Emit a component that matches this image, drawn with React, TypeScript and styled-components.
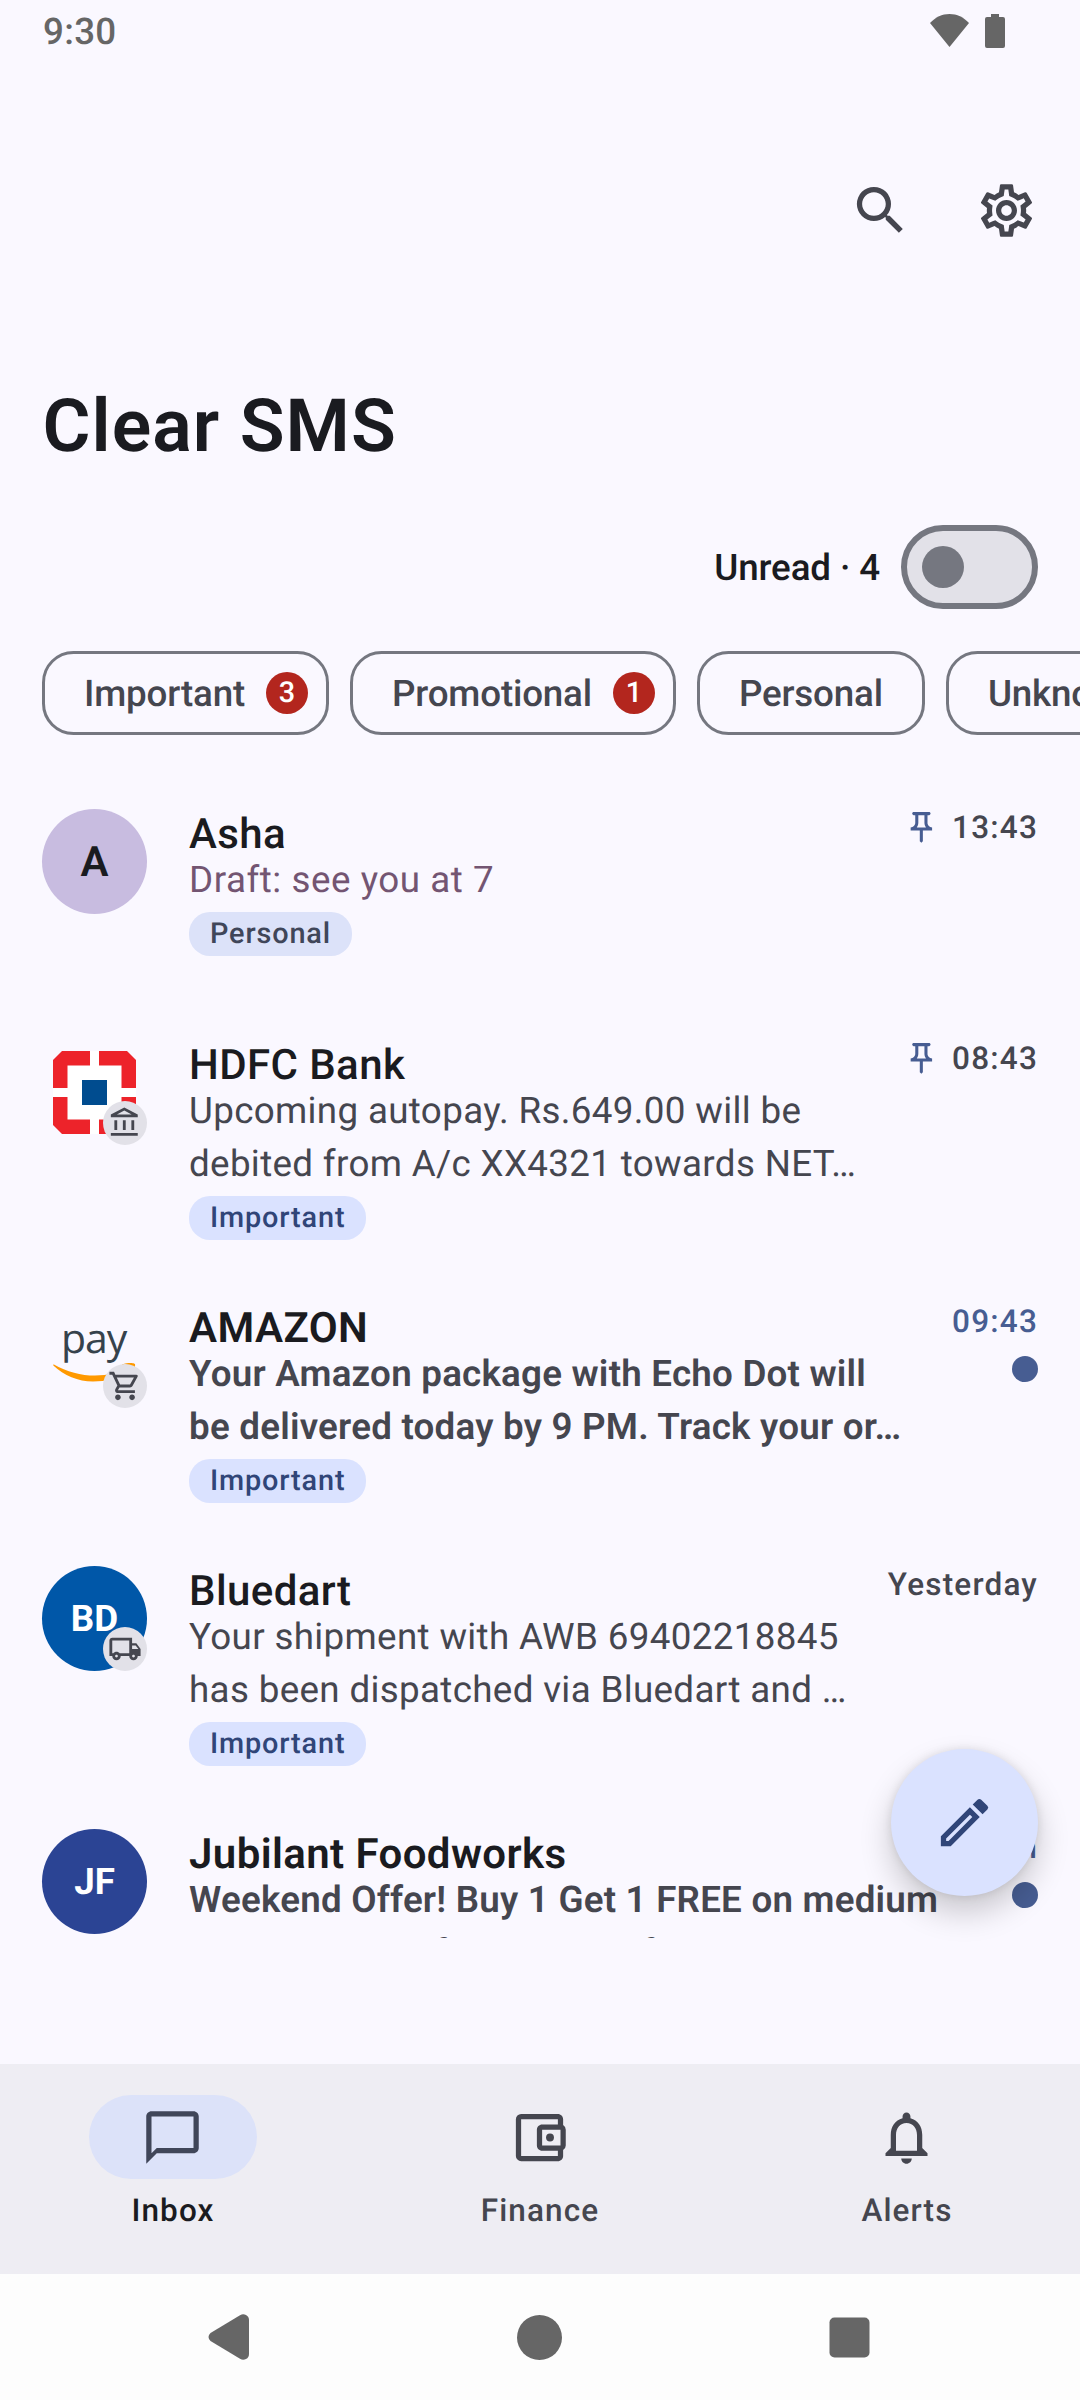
import React from "react";
import styled, { createGlobalStyle } from "styled-components";
import {
  MdSearch,
  MdOutlineSettings,
  MdOutlinePushPin,
  MdOutlineAccountBalance,
  MdOutlineShoppingCart,
  MdOutlineLocalShipping,
  MdOutlineEdit,
  MdChatBubbleOutline,
  MdOutlineAccountBalanceWallet,
  MdNotificationsNone,
} from "react-icons/md";

const color = {
  surface: "#FAF8FF",
  container: "#EEEDF3",
  containerHigh: "#E2E1E8",
  onSurface: "#1A1B20",
  onVariant: "#45464F",
  outline: "#757780",
  primary: "#475D92",
  primaryContainer: "#DAE2FF",
  onPrimaryContainer: "#304578",
  secondaryContainer: "#DCE2F9",
  onSecondaryContainer: "#404659",
  tertiary: "#735572",
  badge: "#B3261E",
  system: "#666666",
};

const GlobalStyle = createGlobalStyle`
  * { box-sizing: border-box; }
  body { margin: 0; background: ${color.surface}; }
`;

const Screen = styled.div`
  width: 1080px;
  height: 2400px;
  display: flex;
  flex-direction: column;
  overflow: hidden;
  background: ${color.surface};
  color: ${color.onSurface};
  font-family: Roboto, "Noto Sans", sans-serif;
  font-size: 36.75px;
  text-rendering: geometricPrecision;
  white-space: nowrap;
  svg { display: block; flex: none; }
`;

const StatusBar = styled.header`
  height: 63px;
  flex: none;
  display: flex;
  align-items: flex-start;
  justify-content: space-between;
  padding: 10px 75px 0 43px;
  color: ${color.system};
  font-weight: 500;
  line-height: 43px;
  letter-spacing: 0.3px;
`;

const StatusIcons = styled.div`
  display: flex;
  gap: 16px;
  padding-top: 4px;
`;

const TopActions = styled.div`
  height: 295px;
  flex: none;
  display: flex;
  justify-content: flex-end;
  gap: 63px;
  padding: 116px 42px 0 0;
  color: ${color.onVariant};
`;

const Title = styled.h1`
  margin: 0;
  padding: 25px 42.5px 0;
  height: 167px;
  flex: none;
  font-size: 73.5px;
  line-height: 86px;
  font-weight: 600;
  letter-spacing: 1.05px;
`;

const UnreadRow = styled.div`
  height: 84px;
  flex: none;
  display: flex;
  align-items: center;
  justify-content: flex-end;
  gap: 21px;
  padding-right: 42px;
  font-weight: 500;
  letter-spacing: -0.12px;
`;

const Switch = styled.div`
  width: 137px;
  height: 84px;
  display: flex;
  align-items: center;
  padding-left: 15px;
  border: 6px solid ${color.outline};
  border-radius: 42px;
  background: ${color.containerHigh};
`;

const Thumb = styled.div`
  width: 42px;
  height: 42px;
  border-radius: 50%;
  background: ${color.outline};
`;

const Filters = styled.nav`
  margin-top: 42px;
  height: 84px;
  flex: none;
  display: flex;
  gap: 21px;
  padding-left: 42px;
`;

const Filter = styled.div<{ $counted: boolean }>`
  flex: none;
  display: flex;
  align-items: center;
  gap: 21px;
  padding: 0 ${(p) => (p.$counted ? 18 : 39)}px 0 39px;
  border: 3px solid ${color.outline};
  border-radius: 31.5px;
  color: ${color.onVariant};
  font-weight: 500;
  letter-spacing: -0.17px;
`;

const Count = styled.span`
  width: 42px;
  height: 42px;
  border-radius: 50%;
  background: ${color.badge};
  color: #fff;
  font-size: 28.875px;
  line-height: 43px;
  letter-spacing: 0;
  text-align: center;
`;

const ListArea = styled.div`
  position: relative;
  height: 1329px;
  flex: none;
`;

const List = styled.main`
  height: 1203px;
  padding-top: 43px;
  overflow: hidden;
`;

const Row = styled.article`
  min-height: 231px;
  display: flex;
  padding: 31px 42px 32px;
`;

const Avatar = styled.div<{ $bg?: string; $fg?: string }>`
  position: relative;
  width: 105px;
  height: 105px;
  flex: none;
  display: flex;
  align-items: center;
  justify-content: center;
  border-radius: 50%;
  background: ${(p) => p.$bg ?? "transparent"};
  color: ${(p) => p.$fg ?? "#fff"};
`;

const Initials = styled.span<{ $size: number; $weight: number }>`
  padding-top: ${(p) => (p.$size > 40 ? 1 : 0)}px;
  font-size: ${(p) => p.$size}px;
  font-weight: ${(p) => p.$weight};
`;

const CategoryBadge = styled.span`
  position: absolute;
  right: 0;
  bottom: 0;
  width: 44px;
  height: 44px;
  display: flex;
  align-items: center;
  justify-content: center;
  border-radius: 50%;
  background: ${color.containerHigh};
  color: ${color.onVariant};
`;

const Body = styled.div`
  flex: 1;
  min-width: 0;
  margin-left: 42px;
  display: flex;
  flex-direction: column;
  align-items: flex-start;
`;

const Name = styled.div<{ $unread?: boolean }>`
  padding-top: 7px;
  font-size: 42px;
  line-height: 38px;
  letter-spacing: 0.4px;
  font-weight: ${(p) => (p.$unread ? 600 : 500)};
`;

const Preview = styled.div<{ $unread?: boolean; $draft?: boolean }>`
  line-height: 52.5px;
  letter-spacing: ${(p) => (p.$unread ? 0.22 : p.$draft ? 0.54 : 0.34)}px;
  font-weight: ${(p) => (p.$unread ? 600 : 400)};
  color: ${(p) => (p.$draft ? color.tertiary : color.onVariant)};
`;

const Tag = styled.span<{ $strong?: boolean }>`
  margin-top: ${(p) => (p.$strong ? 6 : 5.5)}px;
  height: 44px;
  padding: 0 21px;
  border-radius: 21px;
  font-size: 28.875px;
  line-height: 45px;
  font-weight: 500;
  letter-spacing: 0.86px;
  background: ${(p) => (p.$strong ? color.primaryContainer : color.secondaryContainer)};
  color: ${(p) => (p.$strong ? color.onPrimaryContainer : color.onSecondaryContainer)};
`;

const Meta = styled.div<{ $unread?: boolean }>`
  flex: none;
  display: flex;
  flex-direction: column;
  align-items: flex-end;
  gap: 16px;
  color: ${(p) => (p.$unread ? color.primary : color.onVariant)};
`;

const Time = styled.div`
  display: flex;
  align-items: center;
  gap: 12px;
  font-size: 31.5px;
  line-height: 37px;
  font-weight: 500;
  letter-spacing: 1.2px;
  svg { color: ${color.primary}; }
`;

const UnreadDot = styled.span`
  width: 26px;
  height: 26px;
  border-radius: 50%;
  background: ${color.primary};
`;

const Fab = styled.button`
  position: absolute;
  right: 42px;
  top: 1014px;
  width: 147px;
  height: 147px;
  display: flex;
  align-items: center;
  justify-content: center;
  border: 0;
  padding: 0;
  border-radius: 50%;
  background: ${color.primaryContainer};
  color: ${color.onPrimaryContainer};
  box-shadow: 0 16px 32px rgba(0, 0, 0, 0.2), 0 0 10px rgba(0, 0, 0, 0.1);
`;

const BottomNav = styled.nav`
  height: 210px;
  flex: none;
  display: flex;
  gap: 21px;
  background: ${color.container};
`;

const NavItem = styled.div<{ $active?: boolean }>`
  flex: 1;
  display: flex;
  flex-direction: column;
  align-items: center;
  padding-top: 31px;
  gap: 11px;
  font-size: 31.5px;
  line-height: 42px;
  font-weight: 500;
  letter-spacing: 1.1px;
  color: ${(p) => (p.$active ? color.onSurface : color.onVariant)};
`;

const Pill = styled.div<{ $active?: boolean }>`
  width: 168px;
  height: 84px;
  display: flex;
  align-items: center;
  justify-content: center;
  padding-right: 1px;
  border-radius: 42px;
  background: ${(p) => (p.$active ? color.secondaryContainer : "transparent")};
  color: ${(p) => (p.$active ? color.onSecondaryContainer : color.onVariant)};
`;

const SystemNav = styled.footer`
  height: 126px;
  flex: none;
  display: flex;
  align-items: center;
  justify-content: space-between;
  padding: 0 210px 0 208px;
  background: #fdfdfd;
`;

const HdfcLogo = () => (
  <svg width="83" height="83" viewBox="0 0 83 83">
    <path d="M9 0H74L83 9V74L74 83H9L0 74V9Z" fill="#ED232A" />
    <path d="M14.500 14.500H68.500V68.500H14.500ZM37 0H46V83H37ZM0 37H83V46H0Z" fill="#fff" />
    <rect x="29" y="29" width="25" height="25" fill="#004C8F" />
  </svg>
);

const PayWord = styled.span`
  position: absolute;
  left: 19px;
  top: 10px;
  color: #36424c;
  font-family: "Open Sans", "Noto Sans", sans-serif;
  font-size: 41px;
  font-weight: 500;
  line-height: 50px;
  letter-spacing: -1.1px;
`;

const Smile = styled.svg`
  position: absolute;
  left: 11px;
  top: 60px;
`;

const AmazonPayLogo = () => (
  <>
    <PayWord>pay</PayWord>
    <Smile width="84" height="20" viewBox="0 0 84 20">
      <path d="M0.500 1.200C14 9 28 12.500 42 12.500C55 12.300 66 9.500 76 5.500L73 10C64 15 53 18.500 40 18.500C25 18.500 11 12.500 0.300 2.500Z" fill="#FF9900" />
      <path d="M69 1.500C74 -0.500 80 -0.500 82 1C82.500 4 81 10 77 14L75 13C77 8 78 5 77 4C75 3 71 3 69 3Z" fill="#FF9900" />
    </Smile>
  </>
);

type Message = {
  name: string;
  lines: string[];
  time: string;
  tag?: string;
  pinned?: boolean;
  unread?: boolean;
  draft?: boolean;
  avatar: React.ReactNode;
};

const messages: Message[] = [
  {
    name: "Asha",
    lines: ["Draft: see you at 7"],
    time: "13:43",
    tag: "Personal",
    pinned: true,
    draft: true,
    avatar: (
      <Avatar $bg="#C8BCE0" $fg={color.onSurface}>
        <Initials $size={42} $weight={600}>A</Initials>
      </Avatar>
    ),
  },
  {
    name: "HDFC Bank",
    lines: ["Upcoming autopay. Rs.649.00 will be", "debited from A/c XX4321 towards NET…"],
    time: "08:43",
    tag: "Important",
    pinned: true,
    avatar: (
      <Avatar>
        <HdfcLogo />
        <CategoryBadge><MdOutlineAccountBalance size={34} /></CategoryBadge>
      </Avatar>
    ),
  },
  {
    name: "AMAZON",
    lines: ["Your Amazon package with Echo Dot will", "be delivered today by 9 PM. Track your or…"],
    time: "09:43",
    tag: "Important",
    unread: true,
    avatar: (
      <Avatar>
        <AmazonPayLogo />
        <CategoryBadge><MdOutlineShoppingCart size={34} /></CategoryBadge>
      </Avatar>
    ),
  },
  {
    name: "Bluedart",
    lines: ["Your shipment with AWB 69402218845", "has been dispatched via Bluedart and …"],
    time: "Yesterday",
    tag: "Important",
    avatar: (
      <Avatar $bg="#0057A8">
        <Initials $size={36.75} $weight={700}>BD</Initials>
        <CategoryBadge><MdOutlineLocalShipping size={34} /></CategoryBadge>
      </Avatar>
    ),
  },
  {
    name: "Jubilant Foodworks",
    lines: ["Weekend Offer! Buy 1 Get 1 FREE on medium", "pizzas, savers for gourmet from our menu…"],
    time: "Mon",
    unread: true,
    avatar: (
      <Avatar $bg="#2B4494">
        <Initials $size={36.75} $weight={700}>JF</Initials>
      </Avatar>
    ),
  },
];

const filters: { label: string; count?: number }[] = [
  { label: "Important", count: 3 },
  { label: "Promotional", count: 1 },
  { label: "Personal" },
  { label: "Unknown" },
];

export default function App() {
  return (
    <>
      <GlobalStyle />
      <Screen>
        <StatusBar>
          <span>9:30</span>
          <StatusIcons>
            <svg width="39" height="34" viewBox="0 0 39 34" fill={color.system}>
              <path d="M19.500 33L0 9C5.500 3.200 12 0 19.500 0S33.500 3.200 39 9Z" />
            </svg>
            <svg width="20" height="34" viewBox="0 0 20 34" fill={color.system}>
              <path d="M6 0H14V3H18Q20 3 20 5V32Q20 34 18 34H2Q0 34 0 32V5Q0 3 2 3H6Z" />
            </svg>
          </StatusIcons>
        </StatusBar>
        <TopActions>
          <MdSearch size={63} />
          <MdOutlineSettings size={63} />
        </TopActions>
        <Title>Clear SMS</Title>
        <UnreadRow>
          <span>Unread · 4</span>
          <Switch><Thumb /></Switch>
        </UnreadRow>
        <Filters>
          {filters.map((f) => (
            <Filter key={f.label} $counted={f.count !== undefined}>
              {f.label}
              {f.count !== undefined && <Count>{f.count}</Count>}
            </Filter>
          ))}
        </Filters>
        <ListArea>
          <List>
            {messages.map((m) => (
              <Row key={m.name}>
                {m.avatar}
                <Body>
                  <Name $unread={m.unread}>{m.name}</Name>
                  {m.lines.map((line) => (
                    <Preview key={line} $unread={m.unread} $draft={m.draft}>{line}</Preview>
                  ))}
                  {m.tag && <Tag $strong={m.tag === "Important"}>{m.tag}</Tag>}
                </Body>
                <Meta $unread={m.unread}>
                  <Time>
                    {m.pinned && <MdOutlinePushPin size={36.75} />}
                    <span>{m.time}</span>
                  </Time>
                  {m.unread && <UnreadDot />}
                </Meta>
              </Row>
            ))}
          </List>
          <Fab aria-label="New message"><MdOutlineEdit size={63} /></Fab>
        </ListArea>
        <BottomNav>
          <NavItem $active>
            <Pill $active><MdChatBubbleOutline size={63} /></Pill>
            Inbox
          </NavItem>
          <NavItem>
            <Pill><MdOutlineAccountBalanceWallet size={63} /></Pill>
            Finance
          </NavItem>
          <NavItem>
            <Pill><MdNotificationsNone size={63} /></Pill>
            Alerts
          </NavItem>
        </BottomNav>
        <SystemNav>
          <svg width="41" height="46" viewBox="0 0 41 46" fill={color.system}>
            <path d="M2.500 19L32 1.200Q35 -0.500 38 1Q41 2.500 41 6V40Q41 43.500 38 45Q35 46.500 32 44.800L2.500 27Q-1.500 23 2.500 19Z" />
          </svg>
          <svg width="45" height="45" viewBox="0 0 45 45" fill={color.system}>
            <circle cx="22.500" cy="22.500" r="22.500" />
          </svg>
          <svg width="41" height="41" viewBox="0 0 41 41" fill={color.system}>
            <rect x="0.500" y="0.500" width="40" height="40" rx="5" />
          </svg>
        </SystemNav>
      </Screen>
    </>
  );
}
